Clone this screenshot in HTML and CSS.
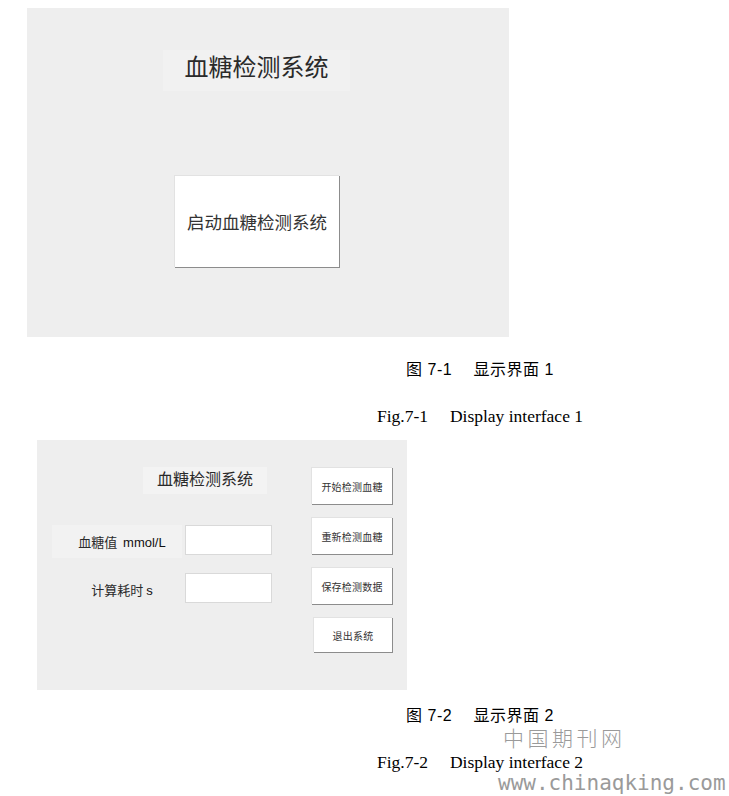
FILE: index.html
```html
<!DOCTYPE html>
<html lang="zh-CN">
  <head>
    <meta charset="utf-8" />
    <meta name="viewport" content="width=device-width, initial-scale=1.0" />
    <title>血糖检测系统 显示界面</title>
    <link rel="stylesheet" href="styles.css">
  </head>
  <body>
    <section class="figure figure-one">
      <div class="panel panel-start">
        <div class="panel-title">血糖检测系统</div>
        <div class="btn btn-start">启动血糖检测系统</div>
      </div>
      <p class="caption-cn">图 7-1　 显示界面 1</p>
      <p class="caption-en">Fig.7-1&nbsp;&nbsp;&nbsp;&nbsp; Display interface 1</p>
    </section>

    <section class="figure figure-two">
      <div class="panel panel-main">
        <div class="main-left">
          <div class="main-title">血糖检测系统</div>
          <div class="field-row">
            <div class="field-label shaded">血糖值&nbsp;&nbsp;<span class="unit">mmol/L</span></div>
            <div class="field-box"></div>
          </div>
          <div class="field-row">
            <div class="field-label">计算耗时 <span class="unit">s</span></div>
            <div class="field-box"></div>
          </div>
        </div>
        <div class="main-actions">
          <div class="btn btn-small">开始检测血糖</div>
          <div class="btn btn-small">重新检测血糖</div>
          <div class="btn btn-small">保存检测数据</div>
          <div class="btn btn-small btn-exit">退出系统</div>
        </div>
      </div>
      <p class="caption-cn caption-cn-two">图 7-2　 显示界面 2</p>
      <p class="caption-en">Fig.7-2&nbsp;&nbsp;&nbsp;&nbsp; Display interface 2</p>
    </section>

    <div class="watermark watermark-name">中国期刊网</div>
    <div class="watermark watermark-url">www.chinaqking.com</div>
  </body>
</html>
```

FILE: styles.css
```css
* {
  margin: 0;
  padding: 0;
  box-sizing: border-box;
}
body {
  position: relative;
  background: #fff;
  font-family: "Noto Sans CJK SC", "Liberation Sans", sans-serif;
  color: #222;
  overflow: hidden;
  height: 796px;
}
.panel {
  background: #eeeeee;
}
.btn {
  background: #fff;
  border-top: 1px solid #e2e2e2;
  border-left: 1px solid #e2e2e2;
  box-shadow: 1px 1px 0 #8c8c8c;
  display: flex;
  align-items: center;
  justify-content: center;
  color: #333;
}

/* figure 7-1 */
.panel-start {
  margin: 8px 0 0 27px;
  width: 482px;
  height: 329px;
  padding-right: 23px;
  display: flex;
  flex-direction: column;
  align-items: center;
}
.panel-title {
  margin-top: 42px;
  width: 187px;
  height: 41px;
  background: #f1f1f1;
  font-size: 24px;
  line-height: 32px;
  text-align: center;
  color: #2a2a2a;
}
.btn-start {
  margin-top: 84px;
  width: 165px;
  height: 92px;
  font-size: 17.5px;
}

/* captions */
.caption-cn {
  margin: 23px 0 0 330px;
  width: 300px;
  text-align: center;
  font-family: "Liberation Sans", "Noto Sans CJK SC", sans-serif;
  font-size: 16px;
  line-height: 20px;
  letter-spacing: 0.5px;
  color: #000;
}
.caption-cn-two {
  margin-top: 16px;
}
.caption-en {
  margin: 26px 0 0 330px;
  width: 300px;
  text-align: center;
  font-family: "Liberation Serif", serif;
  font-size: 17.5px;
  line-height: 20px;
  color: #000;
}

/* figure 7-2 */
.panel-main {
  margin: 14px 0 0 37px;
  width: 370px;
  height: 250px;
  padding: 27px 0 0 15px;
  display: flex;
}
.main-left {
  width: 259px;
}
.main-title {
  margin-left: 91px;
  width: 124px;
  height: 27px;
  background: #f3f3f3;
  font-size: 16px;
  line-height: 22px;
  text-align: center;
  color: #2a2a2a;
}
.field-row {
  display: flex;
  margin-top: 15px;
}
.main-title + .field-row {
  margin-top: 31px;
}
.field-label {
  width: 130px;
  height: 33px;
  padding-left: 10px;
  line-height: 33px;
  text-align: center;
  font-size: 13px;
  color: #2a2a2a;
}
.field-label.shaded {
  background: #f2f2f2;
}
.unit {
  font-family: "Liberation Sans", sans-serif;
  color: #111;
}
.field-box {
  margin-left: 3px;
  width: 87px;
  height: 30px;
  background: #fff;
  border: 1px solid #d9d9d9;
}
.main-actions {
  width: 81px;
  display: flex;
  flex-direction: column;
  gap: 13px;
}
.btn-small {
  height: 37px;
  font-size: 10px;
  letter-spacing: 0.2px;
}
.btn-exit {
  margin-left: 2px;
  width: 79px;
  height: 35px;
}

/* site watermark */
.watermark {
  position: absolute;
  color: #9a9a9a;
  white-space: nowrap;
}
.watermark-name {
  left: 503px;
  top: 725px;
  font-size: 21px;
  line-height: 24px;
  letter-spacing: 3.5px;
  font-weight: 300;
}
.watermark-url {
  left: 498px;
  top: 771px;
  font-family: "DejaVu Sans Mono", monospace;
  font-size: 21px;
  line-height: 24px;
}
```
